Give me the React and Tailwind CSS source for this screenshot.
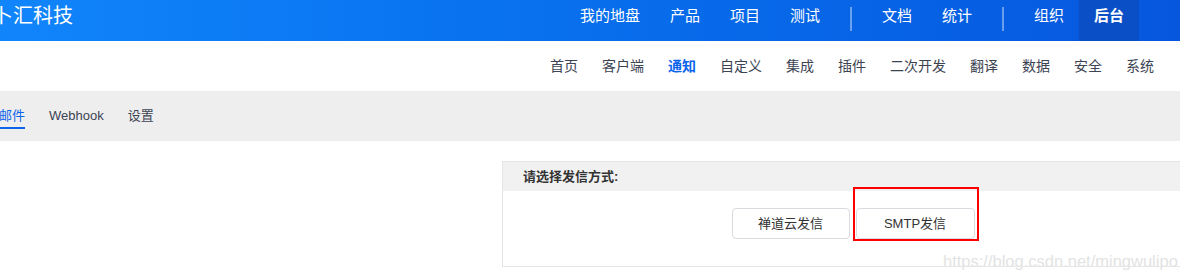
const topNav = [
  { label: "我的地盘" },
  { label: "产品" },
  { label: "项目" },
  { label: "测试" },
  { divider: true },
  { label: "文档" },
  { label: "统计" },
  { divider: true },
  { label: "组织" },
  { label: "后台", active: true },
];

const subNav = ["首页", "客户端", "通知", "自定义", "集成", "插件", "二次开发", "翻译", "数据", "安全", "系统"];

const tabs = ["邮件", "Webhook", "设置"];

export default function App() {
  return (
    <div className="relative w-[1180px] h-[280px] overflow-hidden bg-white font-['Liberation_Sans','Noto_Sans_CJK_SC',sans-serif] text-[#333]">
      {/* top header */}
      <div className="h-[41px] flex justify-between bg-linear-to-r from-[#1185fb] to-[#0757dd]">
        <div className="ml-[-7px] text-[20px] leading-[33px] text-white whitespace-nowrap">卜汇科技</div>
        <div className="flex h-full items-start pr-[41px]">
          {topNav.map((item, i) =>
            item.divider ? (
              <div key={i} className="mx-[15px] mt-[7px] h-[24px] w-[2px] bg-white/40" />
            ) : (
              <div
                key={i}
                className={
                  "h-full px-[15px] text-[15px] leading-[32px] text-white whitespace-nowrap " +
                  (item.active ? "bg-[#0b4fc6] font-bold" : "")
                }
              >
                {item.label}
              </div>
            )
          )}
        </div>
      </div>

      {/* sub nav */}
      <div className="h-[50px] flex justify-end items-center pr-[14px] text-[14px]">
        {subNav.map((s) => (
          <div key={s} className={"px-3 " + (s === "通知" ? "text-[#0c64eb] font-bold" : "text-[#3c4353]")}>
            {s}
          </div>
        ))}
      </div>

      {/* tabs */}
      <div className="h-[50px] bg-[#eeeeee] flex items-start ml-[-13px] text-[13px]">
        {tabs.map((t, i) => (
          <div key={t} className="px-3 flex">
            <span
              className={
                "pt-[15px] leading-[20px] pb-[1px] border-b-2 " +
                (i === 0 ? "text-[#0c64eb] border-[#0c64eb]" : "text-[#3c4353] border-transparent")
              }
            >
              {t}
            </span>
          </div>
        ))}
      </div>

      {/* panel */}
      <div className="flex pt-[20px]">
        <div className="w-[502px] shrink-0" />
        <div className="w-[702px] shrink-0 border border-[#e5e5e5]">
          <div className="h-[29px] bg-[#f1f1f1] pl-[20px] flex items-center text-[13px] font-bold text-[#333]">
            请选择发信方式:
          </div>
          <div className="h-[75px] flex justify-center items-start pt-[17px] gap-[6px]">
            <button className="w-[118px] h-[31px] rounded-[4px] border border-[#d8dbe0] bg-white text-[13px] text-[#333]">
              禅道云发信
            </button>
            <button className="w-[119px] h-[31px] rounded-[4px] border border-[#d8dbe0] bg-white text-[13px] text-[#333]">
              SMTP发信
            </button>
          </div>
        </div>
      </div>

      {/* annotation box */}
      <div className="absolute left-[853px] top-[187px] w-[126px] h-[54px] border-2 border-[#ff0000]" />

      {/* watermark */}
      <div className="absolute left-[943px] top-[249px] text-[16.5px] text-[#e3e3e3] whitespace-nowrap [text-shadow:0_0_1px_#fff]">
        https://blog.csdn.net/mingwulipo
      </div>
    </div>
  );
}
